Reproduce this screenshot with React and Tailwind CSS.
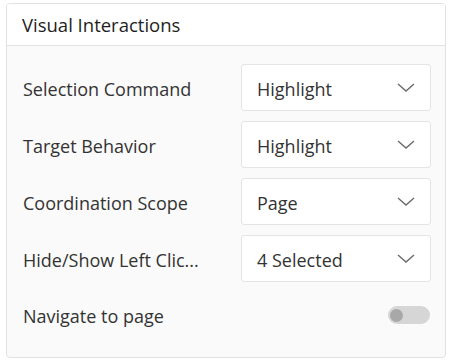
const rows = [
  { label: 'Selection Command', value: 'Highlight' },
  { label: 'Target Behavior', value: 'Highlight' },
  { label: 'Coordination Scope', value: 'Page' },
  { label: 'Hide/Show Left Clic...', value: '4 Selected' },
]

const Chevron = () => (
  <svg width="18" height="9" viewBox="0 0 18 9" fill="none">
    <path d="M1 1l8 7 8-7" stroke="#6b6b6b" strokeWidth="1.4" />
  </svg>
)

const App = () => {
  return (
    <div className="w-[454px] h-[364px] bg-white pt-[3px] pl-[6px]" style={{ fontFamily: '"Open Sans", sans-serif' }}>
      <div className="w-[440px] h-[355px] rounded-[4px] border border-[#e2e2e2] overflow-hidden flex flex-col bg-[#fafafa]">
        <div className="h-[42px] bg-white border-b border-[#e2e2e2] flex items-center pl-[15px] text-[18.5px] font-medium text-[#1e1e1e]">
          Visual Interactions
        </div>
        <div className="flex flex-col gap-[10px] pt-[18px] pl-[16px] pr-[14px]">
          {rows.map((r) => (
            <div key={r.label} className="flex items-center justify-between h-[47px]">
              <span className="text-[18px] text-[#333] pt-[3px]">{r.label}</span>
              <div className="w-[190px] h-[47px] bg-white border border-[#e4e4e4] rounded-[3px] flex items-center justify-between pl-[15px] pr-[15px] text-[18px] text-[#333]">
                <span className="pt-[3px]">{r.value}</span>
                <Chevron />
              </div>
            </div>
          ))}
          <div className="flex items-center justify-between h-[46px] pr-[1px]">
            <span className="text-[18px] text-[#333] pt-[3px]">Navigate to page</span>
            <div className="w-[42px] h-[18px] rounded-full bg-[#d6d6d6] flex items-center pl-[2px]">
              <div className="w-[13px] h-[13px] rounded-full bg-[#a8a8a8]" />
            </div>
          </div>
        </div>
      </div>
    </div>
  )
}

export default App
